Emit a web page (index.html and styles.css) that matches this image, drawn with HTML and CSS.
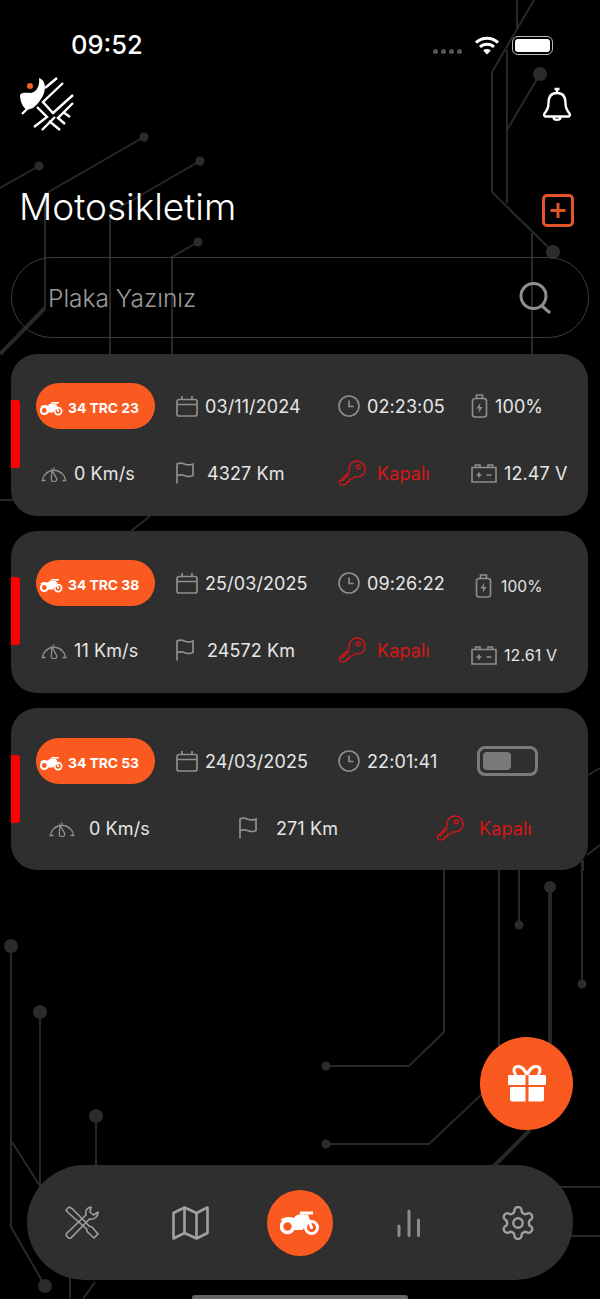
FILE: index.html
```html
<!DOCTYPE html>
<html lang="en">
<head>
    <meta charset="UTF-8">
    <meta name="viewport" content="width=device-width, initial-scale=1.0">
    <title>Motosikletim</title>
    <link rel="stylesheet" href="styles.css">
</head>
<body>
    <svg class="defs" width="0" height="0">
        <symbol id="moto" viewBox="0 0 40 24">
            <circle cx="7.5" cy="15.5" r="6" fill="none" stroke="currentColor" stroke-width="3.6"/>
            <circle cx="31.5" cy="16.5" r="6" fill="none" stroke="currentColor" stroke-width="3"/>
            <circle cx="31.5" cy="16.5" r="1.6" fill="currentColor"/>
            <path d="M31.5 16.5 L26.5 4 M20 2 H33" fill="none" stroke="currentColor" stroke-width="3"/>
            <path d="M0.5 9 C4 5.5 10 5.5 14 7 C16 3 21 2.5 27 4.5 L29 10 L22.500 19 H14 C14.500 13 11 9.500 6.500 9.500 C4.500 9.500 2.500 9.800 0.500 9 Z" fill="currentColor"/>
        </symbol>
        <symbol id="calendar" viewBox="0 0 22 22">
            <path d="M3 4.500 H19 A2 2 0 0 1 21 6.500 V19 A2 2 0 0 1 19 21 H3 A2 2 0 0 1 1 19 V6.500 A2 2 0 0 1 3 4.500 Z M1 9.500 H21 M6 1 V5 M16 1 V5" fill="none" stroke="currentColor" stroke-width="1.700"/>
        </symbol>
        <symbol id="clock" viewBox="0 0 22 22">
            <circle cx="11" cy="11" r="10" fill="none" stroke="currentColor" stroke-width="1.600"/>
            <path d="M11 5.500 V11.500 H15.500" fill="none" stroke="currentColor" stroke-width="1.600"/>
        </symbol>
        <symbol id="powerbank" viewBox="0 0 16 24">
            <path d="M5 1 H11 V4.500 H5 Z M3.500 4.500 H12.500 A2.500 2.500 0 0 1 15 7 V20.500 A2.500 2.500 0 0 1 12.500 23 H3.500 A2.500 2.500 0 0 1 1 20.500 V7 A2.500 2.500 0 0 1 3.500 4.500 Z" fill="none" stroke="currentColor" stroke-width="1.600"/>
            <path d="M9 8.500 L5 14.500 H7.800 L7 19 L11 13 H8.200 Z" fill="currentColor"/>
        </symbol>
        <symbol id="gauge" viewBox="0 0 26 18">
            <path d="M4.500 16.500 H1.300 A11.800 11.800 0 0 1 24.700 16.500 H21.500" fill="none" stroke="currentColor" stroke-width="1.400"/>
            <path d="M11 6 L15.300 13.800 A2.700 2.700 0 1 1 10.300 15 Z" fill="none" stroke="currentColor" stroke-width="1.300"/>
            <path d="M13 3.500 V5.500 M5.500 8 L7 9.300 M20.500 8 L19 9.300" stroke="currentColor" stroke-width="1.200"/>
        </symbol>
        <symbol id="flag" viewBox="0 0 18 22">
            <path d="M1 21.500 V2 C4 0.500 6.500 1.200 9 2.200 C11.500 3.200 14 3.400 17 2 V13.500 C14 15 11.500 14.700 9 13.700 C6.500 12.700 4 12.300 1 13.500" fill="none" stroke="currentColor" stroke-width="1.700"/>
        </symbol>
        <symbol id="key" viewBox="0 0 28 26">
            <path d="M1.200 21.500 L11.300 11.400 C9.800 6.500 13.300 1 19 1 C24 1 27 4.800 27 9.200 C27 14.500 22 18.400 16.800 16.700 L14.400 19.100 H11.600 V21.700 H8.800 V23.600 L5.400 24.900 H2.400 Z M3.500 21.500 L11.500 14" fill="none" stroke="currentColor" stroke-width="1.300" stroke-linejoin="round"/>
            <circle cx="20.300" cy="6.800" r="2" fill="none" stroke="currentColor" stroke-width="1.300"/>
        </symbol>
        <symbol id="carbat" viewBox="0 0 26 19">
            <path d="M1 3.500 H25 V18 H1 Z M4.500 3.500 V1 H9 V3.500 M17 3.500 V1 H21.500 V3.500" fill="none" stroke="currentColor" stroke-width="1.600"/>
            <path d="M5.500 11 H10.500 M8 8.500 V13.500 M15.500 11 H20.500" fill="none" stroke="currentColor" stroke-width="1.700"/>
        </symbol>
    </svg>

    <div class="page">
        <!-- circuit lines behind everything -->
        <svg class="circuit" width="600" height="1299" viewBox="0 0 600 1299">
            <g class="trace">
                <path d="M534 0 L492 72 V192 L553 252"/>
                <path d="M517 0 V28 M507 50 V203"/>
                <path d="M540 74 L507 130"/>
                <path d="M144 137 L45 194 V308"/>
                <path d="M39 166 L0 188"/>
                <path d="M200 161 L110 213 V354"/>
                <path d="M198 242 L172 257 V354"/>
                <path d="M532 233 V354"/>
                <path d="M0 500 H16 M150 516 L130 532"/>
                <path d="M588 775 L600 768 M587 855 L600 845 M583 860 V871"/>
                <path d="M444 860 V1032 L409 1066 H326"/>
                <path d="M499 860 V1060 M519 860 V925 M582 860 V984"/>
                <path d="M326 1144 H429 L482 1094"/>
                <path d="M11 946 V1227 L45 1286"/>
                <path d="M12 1142 L40 1186 M40 1012 V1190 M96 1116 V1170"/>
                <path d="M70 1278 V1299 M95 1282 L83 1299"/>
                <path d="M555 1187 H600 M565 1236 H600"/>
            </g>
            <path class="trace-thick" d="M550 887 V1050 M530 1130 L492 1168 M45 308 L0 354"/>
            <g class="node">
                <circle cx="553" cy="252" r="7"/><circle cx="540" cy="74" r="7"/>
                <circle cx="144" cy="137" r="4.500"/><circle cx="39" cy="166" r="4.500"/>
                <circle cx="200" cy="161" r="4.500"/><circle cx="198" cy="242" r="4.500"/>
                <circle cx="326" cy="1066" r="4.500"/><circle cx="326" cy="1144" r="4.500"/>
                <circle cx="519" cy="925" r="4.500"/><circle cx="582" cy="984" r="4.500"/>
                <circle cx="550" cy="887" r="6"/><circle cx="11" cy="946" r="7"/>
                <circle cx="40" cy="1012" r="7"/><circle cx="96" cy="1116" r="7"/>
                <circle cx="45" cy="1286" r="7"/>
            </g>
        </svg>

        <div class="status-bar">
            <span class="time">09:52</span>
            <div class="status-icons">
                <div class="signal"><i></i><i></i><i></i><i></i></div>
                <svg class="wifi" width="26" height="19" viewBox="0 0 26 19">
                    <path d="M13 18.500 L9.200 14.400 A5.600 5.600 0 0 1 16.800 14.400 Z" fill="#fff"/>
                    <path d="M6 11 A10 10 0 0 1 20 11 M2 6.600 A15.800 15.800 0 0 1 24 6.600" fill="none" stroke="#fff" stroke-width="3"/>
                </svg>
                <div class="battery"><div class="battery-level"></div></div>
            </div>
        </div>

        <div class="top-bar">
            <svg class="logo" width="58" height="58" viewBox="18 74 58 58">
                <path d="M39 78 C45 80 46 87 44 93 C42 99 37 105 33 108 L27 110 C22 107 20 100 20 95 C22 92 26 93 31 93 C37 92 40 85 39 78Z" fill="#fff"/>
                <circle cx="30" cy="86" r="3" fill="#f4602a"/>
                <path d="M22 114 L28 108 M45 88 L57 78 M63 83 L43 102 L53 113 L73 95 M37 107 L47 117 L34 127 M42 130 L55 117 M49 121 L60 130 M65 124 L58 118 L73 103 M63 112 L70 117" fill="none" stroke="#fff" stroke-width="2.400"/>
            </svg>
            <svg class="bell" width="30" height="36" viewBox="0 0 30 36">
                <path d="M15 6 C8.500 6 6.500 11 6.500 16 C6.500 22 4.500 24 2.500 26.500 C1.500 28 2.500 29.500 4 29.500 H26 C27.500 29.500 28.500 28 27.500 26.500 C25.500 24 23.500 22 23.500 16 C23.500 11 21.500 6 15 6 Z M11.500 29.500 C11.500 34 18.500 34 18.500 29.500 M15 6 V2.500 M12.500 2 H17.500" fill="none" stroke="#fff" stroke-width="2.400"/>
            </svg>
        </div>

        <div class="title-row">
            <h1>Motosikletim</h1>
            <svg class="add-btn" width="32" height="33" viewBox="0 0 32 33">
                <rect x="1.500" y="1.500" width="29" height="30" rx="3.500" fill="none" stroke="#e2552a" stroke-width="3"/>
                <path d="M8.500 16.500 H23.500 M16 9 V24" fill="none" stroke="#e2552a" stroke-width="3"/>
            </svg>
        </div>

        <div class="search">
            <span class="placeholder">Plaka Yazınız</span>
            <svg width="33" height="32" viewBox="0 0 33 32">
                <circle cx="14.500" cy="14" r="12.500" fill="none" stroke="#8e8e8e" stroke-width="3"/>
                <path d="M23 24 L31 31" fill="none" stroke="#8e8e8e" stroke-width="3"/>
            </svg>
        </div>

        <div class="card-list">
            <div class="card">
                <div class="card-mark"></div>
                <div class="row">
                    <div class="plate"><svg class="plate-icon"><use href="#moto"/></svg>34 TRC 23</div>
                    <div class="cell"><svg class="ic ic-22"><use href="#calendar"/></svg>03/11/2024</div>
                    <div class="cell"><svg class="ic ic-22"><use href="#clock"/></svg>02:23:05</div>
                    <div class="cell"><svg class="ic ic-bank"><use href="#powerbank"/></svg>100%</div>
                </div>
                <div class="row">
                    <div class="cell cell-speed"><svg class="ic ic-gauge"><use href="#gauge"/></svg>0 Km/s</div>
                    <div class="cell cell-km"><svg class="ic ic-flag"><use href="#flag"/></svg>4327 Km</div>
                    <div class="cell cell-key"><svg class="ic ic-key"><use href="#key"/></svg>Kapalı</div>
                    <div class="cell"><svg class="ic ic-carbat"><use href="#carbat"/></svg>12.47 V</div>
                </div>
            </div>

            <div class="card">
                <div class="card-mark"></div>
                <div class="row">
                    <div class="plate"><svg class="plate-icon"><use href="#moto"/></svg>34 TRC 38</div>
                    <div class="cell"><svg class="ic ic-22"><use href="#calendar"/></svg>25/03/2025</div>
                    <div class="cell"><svg class="ic ic-22"><use href="#clock"/></svg>09:26:22</div>
                    <div class="cell cell-small cell-bank"><svg class="ic ic-bank"><use href="#powerbank"/></svg>100%</div>
                </div>
                <div class="row">
                    <div class="cell cell-speed"><svg class="ic ic-gauge"><use href="#gauge"/></svg>11 Km/s</div>
                    <div class="cell cell-km"><svg class="ic ic-flag"><use href="#flag"/></svg>24572 Km</div>
                    <div class="cell cell-key"><svg class="ic ic-key"><use href="#key"/></svg>Kapalı</div>
                    <div class="cell cell-small cell-volt"><svg class="ic ic-carbat"><use href="#carbat"/></svg>12.61 V</div>
                </div>
            </div>

            <div class="card card-last">
                <div class="card-mark"></div>
                <div class="row">
                    <div class="plate"><svg class="plate-icon"><use href="#moto"/></svg>34 TRC 53</div>
                    <div class="cell"><svg class="ic ic-22"><use href="#calendar"/></svg>24/03/2025</div>
                    <div class="cell"><svg class="ic ic-22"><use href="#clock"/></svg>22:01:41</div>
                    <div class="toggle"><div class="toggle-fill"></div></div>
                </div>
                <div class="row row-wide">
                    <div class="cell cell-speed-wide"><svg class="ic ic-gauge"><use href="#gauge"/></svg>0 Km/s</div>
                    <div class="cell cell-km-wide"><svg class="ic ic-flag"><use href="#flag"/></svg>271 Km</div>
                    <div class="cell cell-key cell-key-wide"><svg class="ic ic-key"><use href="#key"/></svg>Kapalı</div>
                </div>
            </div>
        </div>

        <div class="gift-btn">
            <svg width="40" height="37" viewBox="0 0 40 37">
                <path d="M20 10 C17 3 13 1 10 1.500 C6.500 2 6 7 9 10 M20 10 C23 3 27 1 30 1.500 C33.500 2 34 7 31 10" fill="none" stroke="#fff" stroke-width="3"/>
                <path d="M2 10 H18.500 V20 H1 V11 A1 1 0 0 1 2 10 Z M21.500 10 H38 A1 1 0 0 1 39 11 V20 H21.500 Z M3 22 H18.500 V36.500 H5 A2 2 0 0 1 3 34.500 Z M21.500 22 H37 V34.500 A2 2 0 0 1 35 36.500 H21.500 Z" fill="#fff"/>
            </svg>
        </div>

        <div class="bottom-nav">
            <div class="nav-item">
                <svg width="34" height="33" viewBox="0 0 34 33" fill="none" stroke="#a0a0a0" stroke-width="1.600" stroke-linejoin="round">
                    <path d="M1 4 L4 1 L7 2.500 L19 14.500 L24 20 L27 21 L33 28 L29 32 L22.500 26 L21.500 23 L15.500 17.500 L3 6.500 Z"/>
                    <path d="M26 1 C22 1.500 20 5 21 9 L2 27 C1 28 1 29.500 2 30.500 L3 31.500 C4 32.500 5.500 32.500 6.500 31.500 L24.500 13 C29 14 33 11 33 6 L28.500 9 L25 6 Z"/>
                </svg>
            </div>
            <div class="nav-item">
                <svg width="37" height="34" viewBox="0 0 37 34" fill="none" stroke="#a0a0a0" stroke-width="2.600" stroke-linejoin="round">
                    <path d="M1.500 7 L12.500 1.500 L24.500 7 L35.500 1.500 V27 L24.500 32.500 L12.500 27 L1.500 32.500 Z M12.500 1.500 V27 M24.500 7 V32.500"/>
                </svg>
            </div>
            <div class="nav-item">
                <div class="nav-active"><svg class="nav-moto"><use href="#moto"/></svg></div>
            </div>
            <div class="nav-item">
                <svg width="24" height="28" viewBox="0 0 24 28" fill="none" stroke="#8c8c8c" stroke-width="3" stroke-linecap="round">
                    <path d="M2 17 V26.500 M12 2 V26.500 M21.500 11 V26.500"/>
                </svg>
            </div>
            <div class="nav-item">
                <svg width="38" height="38" viewBox="0 0 24 24" fill="none" stroke="#a0a0a0" stroke-width="1.500">
                    <path d="M12.220 2h-.44a2 2 0 0 0-2 2v.18a2 2 0 0 1-1 1.730l-.43.25a2 2 0 0 1-2 0l-.15-.08a2 2 0 0 0-2.730.73l-.22.38a2 2 0 0 0 .73 2.730l.15.1a2 2 0 0 1 1 1.720v.51a2 2 0 0 1-1 1.740l-.15.09a2 2 0 0 0-.73 2.730l.22.38a2 2 0 0 0 2.730.73l.15-.08a2 2 0 0 1 2 0l.43.25a2 2 0 0 1 1 1.730V20a2 2 0 0 0 2 2h.44a2 2 0 0 0 2-2v-.18a2 2 0 0 1 1-1.730l.43-.25a2 2 0 0 1 2 0l.15.08a2 2 0 0 0 2.730-.73l.22-.39a2 2 0 0 0-.73-2.730l-.15-.08a2 2 0 0 1-1-1.740v-.5a2 2 0 0 1 1-1.740l.15-.09a2 2 0 0 0 .73-2.730l-.22-.38a2 2 0 0 0-2.730-.73l-.15.08a2 2 0 0 1-2 0l-.43-.25a2 2 0 0 1-1-1.730V4a2 2 0 0 0-2-2z"/>
                    <circle cx="12" cy="12" r="3"/>
                </svg>
            </div>
        </div>

        <div class="home-bar"></div>
    </div>
</body>
</html>
```

FILE: styles.css
```css
:root {
    --orange: #fa5a20;
    --card: #2f2f2f;
    --icon: #8f8f8f;
    --text: #e6e6e6;
    --off: #d81616;
}

* {
    box-sizing: border-box;
}

body {
    margin: 0;
    background: #000;
    font-family: Inter, "Liberation Sans", sans-serif;
    color: var(--text);
}

.defs {
    position: absolute;
}

.page {
    position: relative;
    width: 600px;
    height: 1299px;
    overflow: hidden;
    display: flex;
    flex-direction: column;
    padding-bottom: 19px;
}

.circuit {
    position: absolute;
    top: 0;
    left: 0;
}

.trace {
    fill: none;
    stroke: #282828;
    stroke-width: 2;
}

.trace-thick {
    fill: none;
    stroke: #282828;
    stroke-width: 4;
}

.node {
    fill: #2b2b2b;
}

.status-bar,
.top-bar,
.title-row,
.search,
.card-list,
.gift-btn,
.bottom-nav {
    position: relative;
}

.status-bar {
    height: 74px;
    padding: 30px 47px 0 71px;
    display: flex;
    justify-content: space-between;
    align-items: flex-start;
}

.time {
    font-size: 25.5px;
    font-weight: 500;
    line-height: 30px;
    color: #fff;
}

.status-icons {
    display: flex;
    align-items: flex-start;
    padding-top: 6px;
}

.signal {
    display: flex;
    gap: 3px;
    margin: 13px 12px 0 0;
}

.signal i {
    width: 5px;
    height: 5px;
    border-radius: 50%;
    background: #555;
}

.wifi {
    margin-right: 12px;
}

.battery {
    width: 41px;
    height: 19px;
    border: 1.5px solid #bbb;
    border-radius: 6px;
    padding: 2px;
}

.battery-level {
    width: 100%;
    height: 100%;
    background: #fff;
    border-radius: 3px;
}

.top-bar {
    height: 58px;
    padding: 0 28px 0 18px;
    display: flex;
    justify-content: space-between;
    align-items: center;
}

.bell {
    margin-top: 4px;
}

.title-row {
    margin-top: 56px;
    height: 38px;
    padding: 0 26px 0 19px;
    display: flex;
    justify-content: space-between;
    align-items: center;
}

h1 {
    margin: 0;
    font-size: 37px;
    font-weight: 300;
    line-height: 38px;
    color: #fff;
}

.add-btn {
    margin-top: 6px;
}

.search {
    margin: 31px 11px 16px;
    height: 81px;
    padding: 0 36px;
    border: 1.5px solid #3d3d3d;
    border-radius: 41px;
    display: flex;
    justify-content: space-between;
    align-items: center;
}

.placeholder {
    font-size: 24.5px;
    font-weight: 300;
    color: #9a9a9a;
}

.card-list {
    display: flex;
    flex-direction: column;
    gap: 15px;
    padding: 0 12px 0 11px;
}

.card {
    position: relative;
    height: 162px;
    padding: 29px 0 0 25px;
    background: var(--card);
    border-radius: 26px;
}

.card-last {
    padding-top: 30px;
}

.card-mark {
    position: absolute;
    left: 0;
    top: 46px;
    width: 9px;
    height: 68px;
    background: #f00;
    border-radius: 0 3px 3px 0;
}

.card-last .card-mark {
    top: 47px;
}

.row {
    display: grid;
    grid-template-columns: 140px 162px 133px 1fr;
    height: 46px;
    align-items: center;
}

.row + .row {
    margin-top: 21px;
}

.row-wide {
    grid-template-columns: 203px 197px 1fr;
}

.plate {
    width: 119px;
    height: 46px;
    padding: 4px 0 0 4px;
    display: flex;
    align-items: center;
    gap: 5px;
    background: var(--orange);
    border-radius: 23px;
    color: #fff;
    font-size: 13.8px;
    font-weight: 700;
    white-space: nowrap;
}

.plate-icon {
    width: 23px;
    height: 15px;
}

.cell {
    display: flex;
    align-items: center;
    gap: 7px;
    font-size: 18px;
    font-weight: 400;
    letter-spacing: .1px;
    white-space: nowrap;
}

.ic {
    color: var(--icon);
    flex: none;
}

.ic-22 {
    width: 22px;
    height: 22px;
}

.ic-bank {
    width: 17px;
    height: 24px;
}

.ic-gauge {
    width: 26px;
    height: 18px;
}

.ic-flag {
    width: 18px;
    height: 22px;
}

.ic-key {
    width: 28px;
    height: 26px;
    color: var(--off);
}

.ic-carbat {
    width: 26px;
    height: 19px;
}

.cell-speed {
    padding-left: 5px;
}

.cell-km {
    gap: 13px;
}

.cell-key {
    gap: 11px;
    color: var(--off);
}

.cell-key-wide {
    gap: 15px;
}

.cell-speed-wide {
    padding-left: 13px;
    gap: 14px;
}

.cell-km-wide {
    gap: 19px;
}

.cell-small {
    font-size: 16px;
}

.cell-bank {
    padding-left: 4px;
    gap: 9px;
    margin-top: 6px;
    font-size: 15.5px;
}

.cell-volt {
    margin-top: 10px;
}

.toggle {
    width: 61px;
    height: 30px;
    margin-left: 6px;
    padding: 3px;
    border: 3px solid #7a7a7a;
    border-radius: 8px;
}

.toggle-fill {
    width: 28px;
    height: 18px;
    background: #7a7a7a;
    border-radius: 4px;
}

.gift-btn {
    width: 93px;
    height: 93px;
    margin: auto 27px 35px 0;
    align-self: flex-end;
    background: var(--orange);
    border-radius: 50%;
    display: flex;
    justify-content: center;
    align-items: center;
}

.bottom-nav {
    width: 546px;
    height: 115px;
    margin-left: 27px;
    background: var(--card);
    border-radius: 58px;
    display: grid;
    grid-template-columns: repeat(5, 1fr);
    align-items: center;
    justify-items: center;
}

.nav-item {
    display: flex;
    justify-content: center;
    align-items: center;
}

.nav-active {
    width: 66px;
    height: 66px;
    background: var(--orange);
    border-radius: 50%;
    color: #fff;
    display: flex;
    justify-content: center;
    align-items: center;
}

.nav-moto {
    width: 40px;
    height: 24px;
}

.home-bar {
    position: absolute;
    left: 192px;
    bottom: 0;
    width: 216px;
    height: 4px;
    background: #666;
    border-radius: 3px 3px 0 0;
}
```
